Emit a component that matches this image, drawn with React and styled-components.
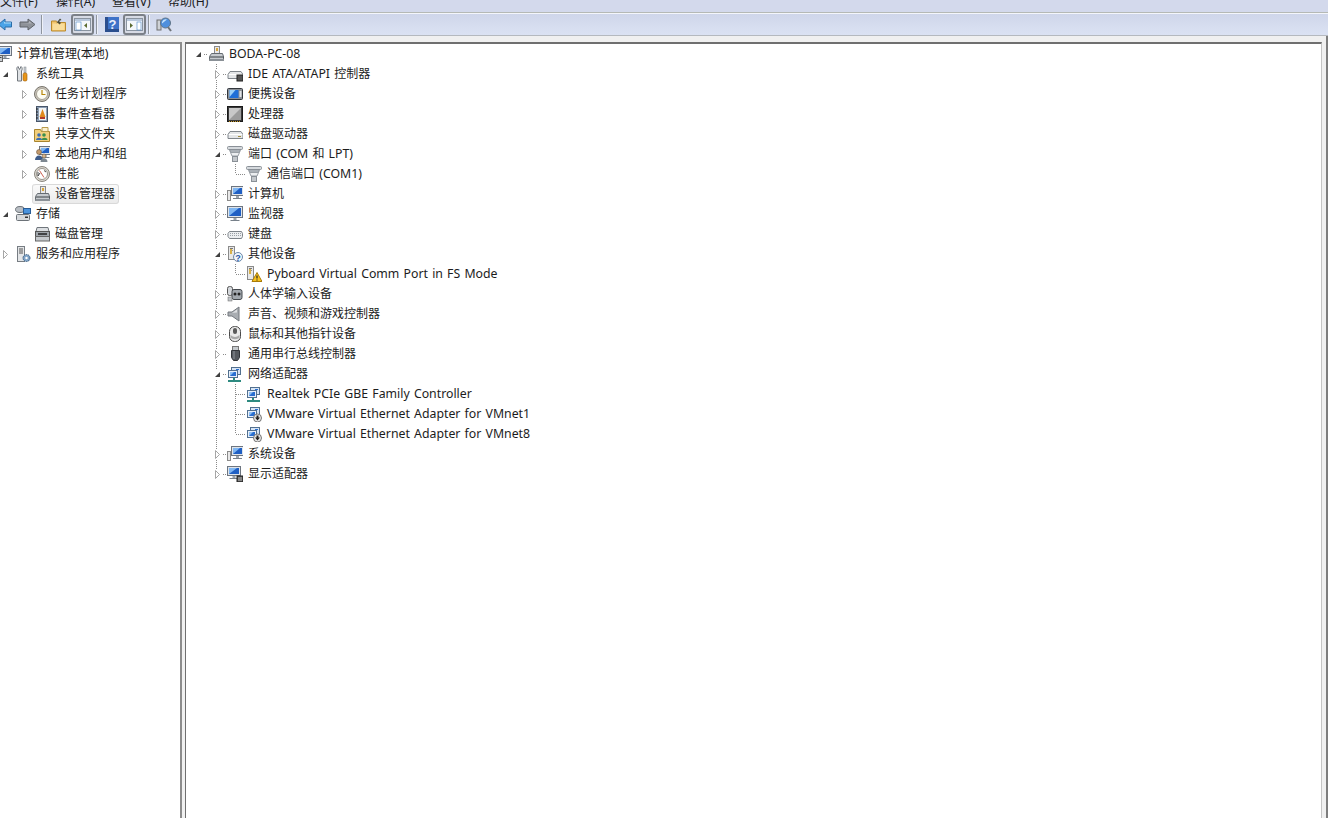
import React from "react";
import styled, { createGlobalStyle } from "styled-components";

// little helper shapes shared by the 16px tree icons
const Tower = ({ x = 1, y = 1 }) => (
  <g transform={`translate(${x} ${y})`}>
    <rect x="0.5" y="0.5" width="6" height="13" fill="#e8e8e8" stroke="#8a8a8a" />
    <rect x="2" y="2" width="3" height="1" fill="#777" />
    <rect x="2" y="4" width="3" height="1" fill="#999" />
  </g>
);
const Screen = ({ x = 3, y = 1, w = 12, h = 9 }) => (
  <g>
    <rect x={x + 0.5} y={y + 0.5} width={w} height={h} fill="#dfe4ea" stroke="#6d7580" />
    <rect x={x + 2} y={y + 2} width={w - 3} height={h - 3} fill="#1f5fc4" />
    <path d={`M${x + 2} ${y + 2}h${w - 5}l-${w - 5} ${h - 3}z`} fill="#7fb6f2" />
    <rect x={x + w / 2 - 1} y={y + h + 1} width="3" height="2" fill="#9aa2ab" />
    <rect x={x + w / 2 - 4} y={y + h + 3} width="9" height="1" fill="#77808a" />
  </g>
);
const Net = () => (
  <g>
    <rect x="4.5" y="1.5" width="9" height="7" fill="#d6e4f5" stroke="#52708f" />
    <rect x="1.5" y="4.5" width="9" height="7" fill="#e8f0fa" stroke="#52708f" />
    <rect x="3" y="6" width="6" height="4" fill="#2a6fd0" />
    <path d="M3 6h4l-4 4z" fill="#8cc0f5" />
    <rect x="9" y="3" width="3" height="1" fill="#2a6fd0" />
  </g>
);
const DownBadge = () => (
  <g>
    <circle cx="11.5" cy="12" r="4" fill="#e6e6e6" stroke="#777" />
    <path d="M10.5 9.5h2v2h1.5l-2.5 3-2.5-3h1.5z" fill="#222" />
  </g>
);
const PortPlug = () => (
  <g>
    <rect x="0.500" y="0.500" width="15" height="3" rx="1" fill="#d5d9dd" stroke="#8a9097" />
    <path d="M2.500 3.500h11l-1 3h-9z" fill="#aab0b6" stroke="#8a9097" />
    <path d="M3.500 6.500h9l-1.500 3.500h-6z" fill="#eceef0" stroke="#9aa0a6" />
    <rect x="5.500" y="10.500" width="5" height="5" fill="#c4c8cc" stroke="#8a9097" />
  </g>
);
const Drive = ({ chip }) => (
  <g>
    <path d="M3 5.500h11l2 3v4h-15v-4z" fill="#e4e6e8" stroke="#80868c" />
    <path d="M2 8.500h13" stroke="#fff" />
    <rect x="11" y="10" width="3" height="1" fill={chip ? "#333" : "#a08b3c"} />
    {chip && <rect x="10" y="9" width="6" height="6" fill="#555" stroke="#222" />}
  </g>
);
const Host = () => (
  <g>
    <rect x="6.5" y="0.5" width="5" height="8" fill="#e8e8e8" stroke="#8a8a8a" />
    <rect x="8" y="2" width="2" height="3" fill="#d9a53a" />
    <path d="M3.5 7.5h11l1 3v4h-14v-4z" fill="#c6cace" stroke="#666c72" />
    <path d="M2 11h14" stroke="#3d4247" />
    <rect x="1.5" y="13" width="15" height="2" fill="#8a9096" />
  </g>
);

const icons = {
  manage: (
    <g>
      <Screen x={2} y={0} w={13} h={9} />
      <rect x="1.5" y="9.5" width="5" height="6" fill="#c9ced3" stroke="#666" />
      <rect x="2.5" y="11" width="3" height="1" fill="#444" />
    </g>
  ),
  tools: (
    <g>
      <path d="M3 0.500l1.500 3 1.500-3c1.500 1 1.500 3 .5 4.500v10h-4v-10c-1-1.500-1-3.500 .5-4.500z" fill="#dfe2e5" stroke="#70767c" />
      <rect x="9" y="1" width="2" height="6" fill="#c9ced3" stroke="#80868c" strokeWidth=".5" />
      <rect x="8" y="7" width="4" height="8" rx="1.500" fill="#e8961a" stroke="#9c5d08" strokeWidth=".6" />
    </g>
  ),
  clock: (
    <g>
      <circle cx="8" cy="8" r="7.500" fill="#c9c4ba" stroke="#77736b" />
      <circle cx="8" cy="8" r="5.500" fill="#fdfcf3" stroke="#a8a397" />
      <path d="M8 4v4.500h3.500" fill="none" stroke="#b8860b" strokeWidth="1.200" />
    </g>
  ),
  events: (
    <g>
      <rect x="2.500" y="0.500" width="11" height="15" fill="#8ea0b5" stroke="#48566a" />
      <rect x="5" y="2" width="7" height="12" fill="#f3f5f7" />
      <path d="M8.500 3l3 8h-6z" fill="#e08a1e" />
      <rect x="6" y="11" width="5" height="2" fill="#b33a2c" />
      <path d="M2 3h2M2 6h2M2 9h2M2 12h2" stroke="#222" />
    </g>
  ),
  share: (
    <g>
      <path d="M0.500 3.500h6l1 2h8v10h-15z" fill="#f2cf7c" stroke="#a8842e" />
      <path d="M8 1.500h6v4h-6z" fill="#fbf0cf" stroke="#b89a4a" />
      <circle cx="5" cy="9" r="1.800" fill="#3d6fb5" />
      <path d="M2 14c0-3 6-3 6 0z" fill="#3d6fb5" />
      <circle cx="10" cy="9" r="1.800" fill="#3a8f4d" />
      <path d="M7.500 14c0-3 6-3 6 0z" fill="#3a8f4d" />
    </g>
  ),
  users: (
    <g>
      <Screen x={5} y={0} w={11} h={8} />
      <circle cx="5" cy="6" r="2.500" fill="#c49a6c" stroke="#5c4630" strokeWidth=".5" />
      <path d="M1 14c0-6 8-6 8 0z" fill="#3e5c8a" />
      <circle cx="10" cy="10" r="2" fill="#d6b48d" stroke="#5c4630" strokeWidth=".5" />
      <path d="M6.500 16c0-5 7-5 7 0z" fill="#7d8790" />
    </g>
  ),
  gauge: (
    <g>
      <circle cx="8" cy="8" r="7.500" fill="#dcd9d2" stroke="#8a867e" />
      <circle cx="8" cy="8" r="5.500" fill="#fff" stroke="#9a968e" />
      <path d="M5.500 4.500l4.500 7" stroke="#c8503f" strokeWidth=".9" />
      <path d="M4 6v4l2-3M10 4.500l2 1.500" fill="none" stroke="#3a3a3a" strokeWidth=".9" />
    </g>
  ),
  host: <Host />,
  storage: (
    <g>
      <ellipse cx="5" cy="3.500" rx="4.500" ry="3" fill="#b9bec4" stroke="#6c7278" />
      <rect x="8.500" y="2.500" width="7" height="5" fill="#4a93dd" stroke="#2a5d96" />
      <rect x="1.500" y="8.500" width="13" height="6" rx="1" fill="#d6d9dc" stroke="#6c7278" />
      <rect x="10" y="10.500" width="3" height="1.500" fill="#333" />
    </g>
  ),
  disk: (
    <g>
      <path d="M3 1.500h11l1 4h-13z" fill="#dcdfe2" stroke="#70767c" />
      <rect x="1.500" y="5.500" width="14" height="5" fill="#9fa5ab" stroke="#555" />
      <path d="M4 8h9" stroke="#222" strokeWidth="1.500" />
      <rect x="1.500" y="10.500" width="14" height="4.500" fill="#c6cace" stroke="#666" />
    </g>
  ),
  services: (
    <g>
      <rect x="2.500" y="0.500" width="7" height="15" fill="#e4e6e8" stroke="#777d83" />
      <path d="M4 3h4M4 5h4M4 7h4" stroke="#555" />
      <circle cx="11.500" cy="12" r="3.500" fill="#7fa3c7" stroke="#3d5d7e" strokeDasharray="1.500 .7" />
      <circle cx="11.500" cy="12" r="1.200" fill="#fff" />
    </g>
  ),
  ide: <Drive chip />,
  portable: (
    <g>
      <rect x="0.500" y="2.500" width="15" height="11" rx="1" fill="#8b9096" stroke="#33373c" />
      <rect x="2.500" y="4" width="9" height="8" fill="#1f6fd8" />
      <path d="M2.500 4h6l-6 7z" fill="#9cd0f7" />
      <rect x="12.500" y="5" width="2" height="6" fill="#e2e4e7" />
    </g>
  ),
  cpu: (
    <g>
      <rect x="0.500" y="0.500" width="15" height="15" fill="#3a3a3a" stroke="#1a1a1a" />
      <rect x="2" y="2" width="12" height="12" fill="#9c9c9c" />
      <path d="M2 2h12L2 14z" fill="#c8c8c8" />
      <path d="M2 15.500h12" stroke="#c89a2a" strokeDasharray="1 1" />
    </g>
  ),
  drive: <Drive />,
  port: <PortPlug />,
  pc: (
    <g>
      <rect x="0.500" y="4.500" width="3" height="10" fill="#e8e8e8" stroke="#8a8a8a" />
      <Screen x={4} y={0} w={12} h={9} />
    </g>
  ),
  monitor: <Screen x={0} y={0} w={15} h={11} />,
  keyboard: (
    <g>
      <path d="M2.500 5.500h12l1 2v3l-1 2h-12l-1.500-2v-3z" fill="#eceef0" stroke="#7d8389" />
      <path d="M3 7.500h11M3 9.500h11" stroke="#9aa0a6" strokeDasharray="1 1" />
    </g>
  ),
  other: (
    <g>
      <Tower x={1} y={0} />
      <rect x="3" y="3" width="2" height="5" fill="#d9b24a" />
      <circle cx="11" cy="11" r="4.500" fill="#f2f6fb" stroke="#6a87aa" />
      <text x="11" y="14.500" fontSize="9" fontWeight="700" fontFamily="Liberation Sans" textAnchor="middle" fill="#2457a8">?</text>
    </g>
  ),
  warn: (
    <g>
      <Tower x={1} y={0} />
      <rect x="3" y="3" width="2" height="5" fill="#d9b24a" />
      <path d="M11 6.500l5 9h-10z" fill="#f7c21d" stroke="#a87a08" />
      <path d="M11 9.500v3M11 13.500v1" stroke="#222" strokeWidth="1.200" />
    </g>
  ),
  hid: (
    <g>
      <rect x="0.500" y="0.500" width="5" height="9" rx="2" fill="#d5d8dc" stroke="#555" />
      <rect x="5" y="3.500" width="10" height="10" rx="2" fill="#a2a8ae" stroke="#44494e" />
      <circle cx="8" cy="8" r="1.500" fill="#222" />
      <circle cx="12" cy="8" r="1.500" fill="#222" />
      <rect x="1" y="11" width="4" height="4" fill="#c1c5c9" stroke="#666" strokeWidth=".5" />
    </g>
  ),
  speaker: (
    <g>
      <path d="M1 6h4l7-5v14l-7-5h-4z" fill="#a9adb2" stroke="#74797f" />
      <path d="M3 7h2l5-3.500v3z" fill="#dfe1e3" />
    </g>
  ),
  mouse: (
    <g>
      <rect x="2.500" y="0.500" width="11" height="15" rx="5" fill="#e9e9e9" stroke="#4a4a4a" />
      <rect x="6" y="2" width="4" height="6" rx="2" fill="#5a5a5a" />
      <path d="M3.500 9c3 2.500 6 2.500 9 0v2c-1 3-8 3-9 0z" fill="#a9a9a9" />
    </g>
  ),
  usb: (
    <g>
      <rect x="5.500" y="0.500" width="6" height="4" fill="#c6cace" stroke="#777" />
      <path d="M4.500 4.500h8v7l-2 3h-4l-2-3z" fill="#55595e" stroke="#33363a" />
      <path d="M7 5v8" stroke="#8f949a" />
    </g>
  ),
  net: (
    <g>
      <Net />
      <rect x="6" y="12" width="2" height="2" fill="#2d8a80" />
      <rect x="1" y="14" width="13" height="2" fill="#2d8a80" />
    </g>
  ),
  vnet: (
    <g>
      <Net />
      <DownBadge />
    </g>
  ),
  sys: (
    <g>
      <rect x="0.500" y="5.500" width="3" height="9" fill="#e8e8e8" stroke="#8a8a8a" />
      <Screen x={4} y={0} w={12} h={9} />
    </g>
  ),
  display: (
    <g>
      <Screen x={0} y={0} w={13} h={9} />
      <rect x="10" y="10" width="6" height="6" fill="#555" stroke="#222" />
      <path d="M11 12h4M11 14h4" stroke="#bbb" />
    </g>
  ),
};

const leftRows = [
  { label: "计算机管理(本地)", icon: "manage", cells: [] },
  { label: "系统工具", icon: "tools", cells: ["open"] },
  { label: "任务计划程序", icon: "clock", cells: ["blank", "closed"] },
  { label: "事件查看器", icon: "events", cells: ["blank", "closed"] },
  { label: "共享文件夹", icon: "share", cells: ["blank", "closed"] },
  { label: "本地用户和组", icon: "users", cells: ["blank", "closed"] },
  { label: "性能", icon: "gauge", cells: ["blank", "closed"] },
  { label: "设备管理器", icon: "host", cells: ["blank", "blank"], selected: true },
  { label: "存储", icon: "storage", cells: ["open"] },
  { label: "磁盘管理", icon: "disk", cells: ["blank", "blank"] },
  { label: "服务和应用程序", icon: "services", cells: ["closed"] },
];

const rightRows = [
  { label: "BODA-PC-08", icon: "host", cells: ["open"] },
  { label: "IDE ATA/ATAPI 控制器", icon: "ide", cells: ["blank", "closed"] },
  { label: "便携设备", icon: "portable", cells: ["blank", "closed"] },
  { label: "处理器", icon: "cpu", cells: ["blank", "closed"] },
  { label: "磁盘驱动器", icon: "drive", cells: ["blank", "closed"] },
  { label: "端口 (COM 和 LPT)", icon: "port", cells: ["blank", "open"] },
  { label: "通信端口 (COM1)", icon: "port", cells: ["blank", "vert", "end"] },
  { label: "计算机", icon: "pc", cells: ["blank", "closed"] },
  { label: "监视器", icon: "monitor", cells: ["blank", "closed"] },
  { label: "键盘", icon: "keyboard", cells: ["blank", "closed"] },
  { label: "其他设备", icon: "other", cells: ["blank", "open"] },
  { label: "Pyboard Virtual Comm Port in FS Mode", icon: "warn", cells: ["blank", "vert", "end"] },
  { label: "人体学输入设备", icon: "hid", cells: ["blank", "closed"] },
  { label: "声音、视频和游戏控制器", icon: "speaker", cells: ["blank", "closed"] },
  { label: "鼠标和其他指针设备", icon: "mouse", cells: ["blank", "closed"] },
  { label: "通用串行总线控制器", icon: "usb", cells: ["blank", "closed"] },
  { label: "网络适配器", icon: "net", cells: ["blank", "open"] },
  { label: "Realtek PCIe GBE Family Controller", icon: "net", cells: ["blank", "vert", "tee"] },
  { label: "VMware Virtual Ethernet Adapter for VMnet1", icon: "vnet", cells: ["blank", "vert", "tee"] },
  { label: "VMware Virtual Ethernet Adapter for VMnet8", icon: "vnet", cells: ["blank", "vert", "end"] },
  { label: "系统设备", icon: "sys", cells: ["blank", "closed"] },
  { label: "显示适配器", icon: "display", cells: ["blank", "closed"], last: true },
];

const menus = ["文件(F)", "操作(A)", "查看(V)", "帮助(H)"];

function Arrow({ open }) {
  return (
    <Expander>
      <svg width="9" height="9" viewBox="0 0 9 9">
        {open ? (
          <path d="M7 2v5h-5z" fill="#404040" />
        ) : (
          <path d="M2.500 0.500l4 4-4 4z" fill="#fff" stroke="#a6a6a6" />
        )}
      </svg>
    </Expander>
  );
}

// the reference's Latin runs are a touch wider than Noto Sans at 12px
function RunText({ text }) {
  return text
    .split(/([\u3000-\u9fff]+)/)
    .map((run, i) => (/[\u3000-\u9fff]/.test(run) ? run : <Latin key={i}>{run}</Latin>));
}

function TreeRow({ row, lines, isRoot }) {
  return (
    <Row>
      {row.cells.map((cell, i) => {
        const expander = cell === "open" || cell === "closed";
        let kind = cell;
        if (expander) kind = row.last ? "end" : "tee";
        if (isRoot) kind = "stub";
        return (
          <Cell key={i} $kind={lines ? kind : "blank"}>
            {expander && <Arrow open={cell === "open"} />}
          </Cell>
        );
      })}
      <Item $selected={row.selected}>
        <TreeIcon viewBox="0 0 16 16">{icons[row.icon]}</TreeIcon>
        <Label>
          <RunText text={row.label} />
        </Label>
      </Item>
    </Row>
  );
}

export default function App() {
  return (
    <Page>
      <GlobalStyle />
      <MenuBar>
        {menus.map((m) => (
          <MenuItem key={m}>
            <RunText text={m} />
          </MenuItem>
        ))}
      </MenuBar>
      <Toolbar>
        <ToolIcon $w={14} $ml={-2} viewBox="0 0 14 14">
          <path d="M7 1.500v3h6.500v5h-6.500v3l-6.500-5.500z" fill="#4aa3e8" stroke="#2a6da8" />
          <path d="M6 4v2h7v-1h-6z" fill="#a9dcf8" />
        </ToolIcon>
        <ToolIcon $w={17} $ml={7} viewBox="0 0 17 14">
          <path d="M9 1.500v3h-8v5h8v3l7-5.500z" fill="#8e9299" stroke="#5e6268" />
          <path d="M2 5.500h8v-2l3 2.500z" fill="#b5b8bd" />
        </ToolIcon>
        <Separator $ml={5} />
        <ToolIcon $w={15} $ml={9} viewBox="0 0 15 14">
          <path d="M0.500 3.500h5l1 1.500h8v8.500h-14z" fill="#f3c46b" stroke="#b98a2e" />
          <path d="M1.500 6h12v6.500h-12z" fill="#f9dd9b" />
          <path d="M5 6l4-5 1.500 1.500-2.500 1 2 2-1.500 1.500-2-2z" fill="#4a4a38" />
        </ToolIcon>
        <PressedButton>
          <PaneIcon viewBox="0 0 17 13">
            <rect x="0.500" y="0.500" width="16" height="12" fill="#f4f7fb" stroke="#8a94a0" />
            <rect x="1" y="1" width="15" height="2" fill="#b9c8dc" />
            <rect x="2" y="4" width="5" height="8" fill="#fff" stroke="#4b86c5" strokeWidth=".6" />
            <path d="M13 5v5l-3-2.500z" fill="#5a6a30" />
          </PaneIcon>
        </PressedButton>
        <Separator $ml={2} />
        <ToolIcon $w={14} $ml={8} viewBox="0 0 14 15">
          <rect x="0" y="0" width="14" height="15" fill="#3d72c8" />
          <path d="M0 15V0h3v12h11v3z" fill="#2b4f8e" />
          <text x="7.500" y="12" fontSize="13" fontWeight="700" fontFamily="Liberation Sans" textAnchor="middle" fill="#e8f0fb">?</text>
        </ToolIcon>
        <PressedButton $ml={4}>
          <PaneIcon viewBox="0 0 17 13">
            <rect x="0.500" y="0.500" width="16" height="12" fill="#f4f7fb" stroke="#8a94a0" />
            <rect x="1" y="1" width="15" height="2" fill="#b9c8dc" />
            <rect x="11" y="4" width="4" height="8" fill="#fff" stroke="#4b86c5" strokeWidth=".6" />
            <path d="M4 5v5l3-2.500z" fill="#5a6a30" />
          </PaneIcon>
        </PressedButton>
        <Separator $ml={2} />
        <ToolIcon $w={16} $ml={7} viewBox="0 0 16 15">
          <rect x="1" y="3" width="4" height="10" fill="#cfd2d6" stroke="#6e6e6e" />
          <circle cx="9.500" cy="6" r="5" fill="#4f8fdc" stroke="#5f7488" />
          <path d="M6 5a4 4 0 0 1 5-2.500l-5 4z" fill="#c6e2fa" />
          <path d="M12 10l3 4" stroke="#6e7378" strokeWidth="2" />
        </ToolIcon>
      </Toolbar>
      <Workspace>
        <LeftPane>
          <LeftTree>
            {leftRows.map((row) => (
              <TreeRow key={row.label} row={row} />
            ))}
          </LeftTree>
        </LeftPane>
        <RightPane>
          {rightRows.map((row, i) => (
            <TreeRow key={row.label} row={row} lines isRoot={i === 0} />
          ))}
        </RightPane>
      </Workspace>
    </Page>
  );
}

const GlobalStyle = createGlobalStyle`
  html, body {
    margin: 0;
    height: 100%;
    overflow: hidden;
  }
  #root {
    height: 100%;
  }
`;

const Page = styled.div`
  width: 1328px;
  height: 818px;
  display: flex;
  flex-direction: column;
  overflow: hidden;
  background: #f0f0f0;
  color: #1c1c1c;
  font-family: "Noto Sans", "Noto Sans CJK SC", sans-serif;
  font-size: 12px;
`;

const Latin = styled.span`
  font-size: 12.3px;
  word-spacing: 1px;
`;

const MenuBar = styled.div`
  flex: none;
  height: 12px;
  display: flex;
  align-items: flex-end;
  overflow: hidden;
  background: #d3d9ec;
  border-bottom: 1px solid #b5b9b5;
`;

const MenuItem = styled.div`
  flex: none;
  width: 56px;
  height: 20px;
  line-height: 20px;
`;

const Toolbar = styled.div`
  flex: none;
  height: 21px;
  display: flex;
  align-items: center;
  border-top: 1px solid #f4f6fb;
  border-bottom: 1px solid #b5b9bf;
  background: linear-gradient(#cfd6ea, #dbe2f3);
`;

const ToolIcon = styled.svg`
  flex: none;
  width: ${(p) => p.$w}px;
  height: 15px;
  margin-left: ${(p) => p.$ml || 0}px;
`;

const PaneIcon = styled.svg`
  width: 17px;
  height: 13px;
`;

const Separator = styled.div`
  flex: none;
  width: 1px;
  height: 19px;
  margin-left: ${(p) => p.$ml}px;
  background: #8f959e;
  box-shadow: 1px 0 0 #eef1f8;
`;

const PressedButton = styled.div`
  flex: none;
  width: 23px;
  height: 21px;
  box-sizing: border-box;
  margin-left: ${(p) => p.$ml ?? 5}px;
  display: flex;
  align-items: center;
  justify-content: center;
  border: 2px solid #7b8088;
  border-radius: 3px;
  background: #d6dae4;
`;

const Workspace = styled.div`
  flex: 1;
  min-height: 0;
  display: flex;
  padding: 6px 4px 0 0;
  background: #f0f0f0;
  border-right: 2px solid #7d7d7d;
`;

const LeftPane = styled.div`
  flex: none;
  width: 182px;
  box-sizing: border-box;
  border-top: 2px solid #8c8c8c;
  border-right: 2px solid #8c8c8c;
  background: #fff;
  overflow: hidden;
`;

const LeftTree = styled.div`
  margin-left: -5px;
`;

const RightPane = styled.div`
  flex: 1;
  margin-left: 3px;
  padding-left: 2px;
  border-top: 2px solid #6f6f6f;
  border-left: 1px solid #6f6f6f;
  border-right: 1px solid #c4c4c4;
  background: #fff;
  overflow: hidden;
`;

const Row = styled.div`
  height: 20px;
  display: flex;
  align-items: center;
  white-space: nowrap;
`;

const dots = {
  vertical: "repeating-linear-gradient(#8a8a8a 0 1px, transparent 1px 2px)",
  horizontal: "repeating-linear-gradient(to right, #8a8a8a 0 1px, transparent 1px 2px)",
};

// the connector lines of the tree view, one 19x20 cell per depth
const cellBackground = {
  blank: "none",
  vert: `${dots.vertical} 9px 0 / 1px 20px no-repeat`,
  tee: `${dots.vertical} 9px 0 / 1px 20px no-repeat, ${dots.horizontal} 10px 10px / 9px 1px no-repeat`,
  end: `${dots.vertical} 9px 0 / 1px 10px no-repeat, ${dots.horizontal} 10px 10px / 9px 1px no-repeat`,
  stub: `${dots.horizontal} 10px 10px / 9px 1px no-repeat`,
};

const Cell = styled.div`
  flex: none;
  width: 19px;
  height: 20px;
  display: flex;
  align-items: center;
  justify-content: center;
  background: ${(p) => cellBackground[p.$kind]};
`;

const Expander = styled.div`
  width: 9px;
  height: 9px;
  display: flex;
  margin-left: 1px;
  background: #fff;
`;

const Item = styled.div`
  height: 20px;
  display: flex;
  align-items: center;
  box-sizing: border-box;
  padding-right: 3px;
  border-radius: 3px;
  border: 1px solid ${(p) => (p.$selected ? "#d9d9d9" : "transparent")};
  border-left-width: 0;
  background: ${(p) => (p.$selected ? "linear-gradient(#fafafa, #ebebeb)" : "none")};
  box-shadow: ${(p) => (p.$selected ? "-1px 0 0 #d9d9d9" : "none")};
`;

const TreeIcon = styled.svg`
  flex: none;
  width: 16px;
  height: 16px;
  margin: 0 5px 0 1px;
`;

const Label = styled.span`
  line-height: 18px;
`;
